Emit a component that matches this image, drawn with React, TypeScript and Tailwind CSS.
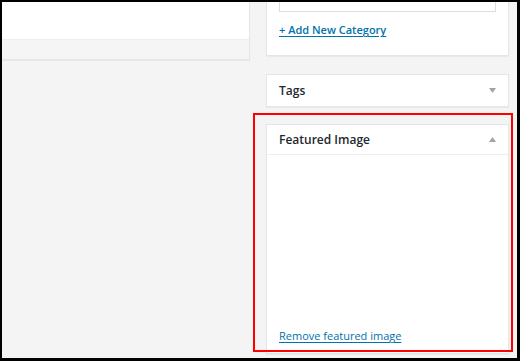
const Caret = ({ up }: { up?: boolean }) => (
	<svg width="7" height="5" viewBox="0 0 7 5" className="shrink-0">
		{up ? <path d="M0 5 L3.5 0 L7 5 Z" fill="#a0a5aa" /> : <path d="M0 0 L3.5 5 L7 0 Z" fill="#a0a5aa" />}
	</svg>
);

export default function App() {
	return (
		<div
			className="w-[520px] h-[361px] bg-black pt-[2px] pl-[2px] pr-[3px] pb-[3px] overflow-hidden"
			style={{ fontFamily: '"Open Sans", "Liberation Sans", sans-serif' }}
		>
			<div className="relative w-full h-full bg-[#f4f4f4] flex overflow-hidden">
				{/* left column */}
				<div className="w-[248px] shrink-0">
					<div className="bg-white border-r border-b border-[#e5e5e5] shadow-[0_1px_1px_rgba(0,0,0,0.04)]">
						<div className="h-[38px] border-b border-[#eeeeee]"></div>
						<div className="h-[19px] bg-[#f5f5f5]"></div>
					</div>
				</div>

				{/* right column */}
				<div className="ml-[16px] w-[243px] shrink-0 flex flex-col">
					<div className="bg-white border-x border-b border-[#e5e5e5] shadow-[0_1px_1px_rgba(0,0,0,0.04)] px-3 pb-[18px]">
						<div className="h-[10px] border-x border-b border-[#dddddd] bg-white"></div>
						<a className="block mt-[10px] text-[11px] leading-[15px] font-semibold text-[#0073aa] underline underline-offset-2 w-fit">
							+ Add New Category
						</a>
					</div>

					<div className="mt-[18px] bg-white border border-[#e5e5e5] shadow-[0_1px_1px_rgba(0,0,0,0.04)] h-[33px] flex items-center justify-between pl-3 pr-3">
						<span className="text-[12px] font-semibold text-[#23282d]">Tags</span>
						<Caret />
					</div>

					<div className="mt-[17px] bg-white border border-[#e5e5e5] shadow-[0_1px_1px_rgba(0,0,0,0.04)] h-[230px] flex flex-col">
						<div className="h-[30px] border-b border-[#eeeeee] flex items-center justify-between pl-3 pr-3">
							<span className="text-[12px] font-semibold text-[#23282d]">Featured Image</span>
							<Caret up />
						</div>
						<div className="flex-1 flex items-end px-3 pb-[10px]">
							<a className="text-[11px] leading-[15px] text-[#0073aa] underline underline-offset-2">
								Remove featured image
							</a>
						</div>
					</div>
				</div>

				{/* annotation box */}
				<div className="absolute left-[251px] top-[111px] w-[260px] h-[239px] border-2 border-[#ff0000] pointer-events-none"></div>
			</div>
		</div>
	);
}
